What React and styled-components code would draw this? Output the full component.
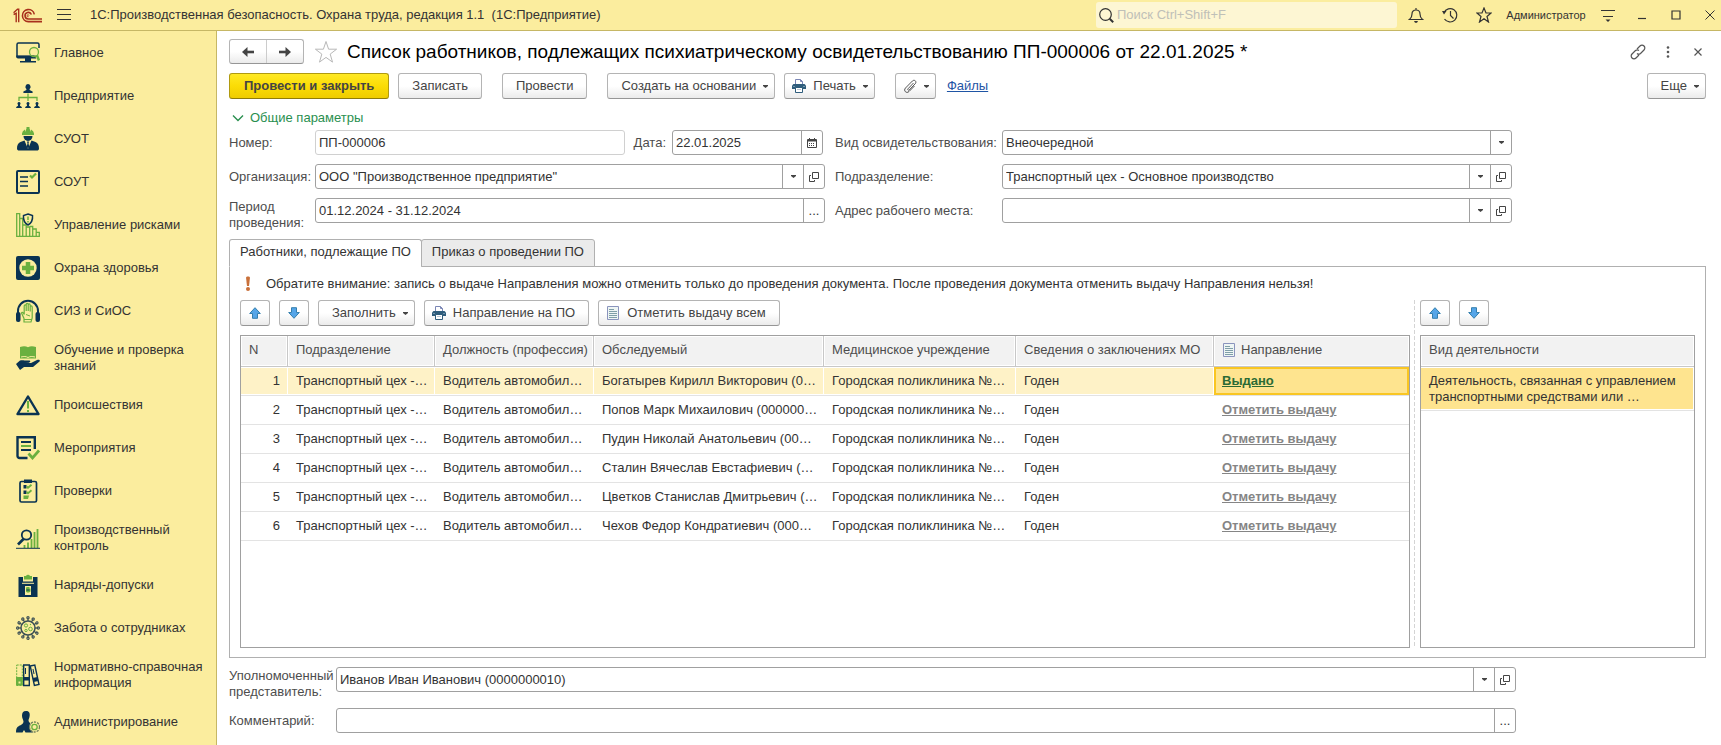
import React from 'react';
import styled, {createGlobalStyle} from 'styled-components';

const NAVY = '#0a3352';
const GREEN = '#6ab03f';

const GlobalStyle = createGlobalStyle`
  * {
    box-sizing: border-box;
  }

  body {
    margin: 0;
    background: #ffffff;
    color: #333333;
    font: 13px/16px "Liberation Sans", Arial, sans-serif;
  }

  button,
  input,
  select {
    margin: 0;
    font: inherit;
    color: inherit;
  }
`;

const Page = styled.div`
  display: flex;
  flex-direction: column;
  min-height: 100vh;
`;

const TopBar = styled.header`
  display: flex;
  align-items: center;
  height: 31px;
  padding-left: 13px;
  background: #fbed9e;
  border-bottom: 1px solid #c6b765;
`;

const AppTitle = styled.div`
  flex: 1;
  margin-left: 18px;
  white-space: pre;
`;

const MenuButton = styled.button`
  display: flex;
  align-items: center;
  justify-content: center;
  width: 16px;
  height: 20px;
  margin-left: 14px;
  padding: 0;
  border: 0;
  background: none;
`;

const Search = styled.label`
  display: flex;
  align-items: center;
  width: 301px;
  height: 26px;
  margin-right: 2px;
  padding: 0 3px;
  border-radius: 3px;
  background: #fdf6d3;
`;

const SearchInput = styled.input`
  flex: 1;
  min-width: 0;
  padding: 0 3px;
  border: 0;
  outline: 0;
  background: none;

  &::placeholder {
    color: #bfc0b8;
    opacity: 1;
  }
`;

const BarButton = styled.button`
  display: flex;
  align-items: center;
  justify-content: ${props => (props.$end ? 'flex-end' : 'center')};
  width: ${props => props.$width || 34}px;
  height: 26px;
  padding: 0 ${props => (props.$end ? 6 : 0)}px 0 0;
  border: 0;
  background: none;
  font-size: 11px;
  color: #333333;
`;

const Body = styled.div`
  display: flex;
  flex: 1;
`;

const Sidebar = styled.nav`
  flex: none;
  width: 217px;
  background: #fbed9e;
  border-right: 1px solid #c6b765;
`;

const SidebarLink = styled.a`
  display: flex;
  align-items: center;
  gap: 14px;
  padding: 10px 8px 9px 16px;
  color: #333333;
  text-decoration: none;

  svg {
    flex: none;
  }
`;

const Main = styled.main`
  display: flex;
  flex: 1;
  flex-direction: column;
  min-width: 0;
  padding: 8px 15px 12px 12px;
`;

const TitleRow = styled.div`
  display: flex;
  align-items: center;
  height: 25px;
`;

const NavGroup = styled.div`
  display: flex;
  height: 25px;
  border: 1px solid #b4b4b4;
  border-bottom-color: #969696;
  border-radius: 3px;
  background: linear-gradient(#ffffff 50%, #ebebeb);
`;

const NavButton = styled.button`
  display: flex;
  align-items: center;
  justify-content: center;
  width: 36px;
  padding: 0;
  border: 0;
  background: none;

  & + & {
    width: 37px;
    border-left: 1px solid #cccccc;
  }
`;

const Title = styled.h1`
  flex: 1;
  margin: 0;
  font-size: 19px;
  line-height: 24px;
  font-weight: 400;
  color: #000000;
  white-space: nowrap;
`;

const PlainButton = styled.button`
  display: flex;
  align-items: center;
  justify-content: ${props => (props.$end ? 'flex-end' : 'center')};
  width: ${props => props.$width || 30}px;
  height: 25px;
  padding: 0 ${props => (props.$end ? 4 : 0)}px 0 0;
  border: 0;
  background: none;
`;

const CommandBar = styled.div`
  display: flex;
  align-items: center;
  gap: 20px;
  margin-top: 9px;
`;

const ButtonGroup = styled.div`
  display: flex;
  align-items: center;
  gap: 9px;
  margin-left: ${props => (props.$end ? 'auto' : 0)};
`;

const Button = styled.button`
  display: flex;
  align-items: center;
  justify-content: center;
  gap: 7px;
  height: 26px;
  padding: 0 ${props => (props.$menu ? 6 : 13)}px 0
    ${props => (props.$icon ? 7 : 13)}px;
  border: 1px solid #b4b4b4;
  border-bottom-color: #969696;
  border-radius: 3px;
  background: linear-gradient(#ffffff 50%, #ebebeb);
  color: #444444;
  white-space: nowrap;
`;

const PrimaryButton = styled(Button)`
  padding: 0 14px;
  border-color: #b09a10;
  border-bottom-color: #8f7c08;
  background: linear-gradient(#ffe924, #fbdc06 50%, #efcc00);
  font-weight: 700;
`;

const ArrowButton = styled(Button)`
  width: 30px;
  padding: 0;
`;

const FilesLink = styled.a`
  margin-left: 2px;
  color: #1f55a5;
`;

const GroupTitle = styled.button`
  display: flex;
  align-items: center;
  align-self: flex-start;
  gap: 6px;
  margin-top: 11px;
  padding: 0 0 0 3px;
  border: 0;
  background: none;
  color: #2a8f4f;
`;

const FormGrid = styled.div`
  display: grid;
  grid-template-columns: 86px minmax(0, 1fr) 177px minmax(0, 1fr);
  align-items: start;
  row-gap: 9px;
  max-width: 1283px;
  margin-top: 4px;
`;

const BottomGrid = styled(FormGrid)`
  grid-template-columns: 107px minmax(0, 1fr);
  row-gap: 8px;
  max-width: 1287px;
  margin-top: 9px;
`;

const Label = styled.label`
  padding-top: ${props => (props.$tall ? 1 : 5)}px;
  padding-left: ${props => (props.$inset ? 10 : 0)}px;
  color: #4d4d4d;
  white-space: nowrap;
`;

const NumberRow = styled.div`
  display: flex;
  padding-right: 2px;

  ${Label} {
    padding: 5px 6px 0 9px;
  }
`;

const Field = styled.div`
  display: flex;
  flex: ${props => (props.$width ? 'none' : 1)};
  width: ${props => (props.$width ? `${props.$width}px` : 'auto')};
  min-width: 0;
  height: 25px;
  border: 1px solid ${props => (props.$muted ? '#d0d0d0' : '#a0a0a0')};
  border-radius: 3px;
  background: #ffffff;
`;

const Input = styled.input`
  flex: 1;
  min-width: 0;
  padding: 0 3px;
  border: 0;
  outline: 0;
  background: none;
`;

const Select = styled.select`
  flex: 1;
  min-width: 0;
  padding: 0 3px;
  border: 0;
  outline: 0;
  background: none;
  appearance: none;
`;

const FieldButton = styled.button`
  display: flex;
  align-items: center;
  justify-content: center;
  width: 21px;
  padding: 0;
  border: 0;
  border-left: 1px solid #a0a0a0;
  background: none;
`;

const Tabs = styled.div`
  display: flex;
  margin-top: 8px;
`;

const Tab = styled.button`
  position: relative;
  height: 28px;
  margin-bottom: -1px;
  padding: 0 10px 2px;
  border: 1px solid #b0b0b0;
  border-bottom-color: ${props => (props.$active ? '#ffffff' : '#b0b0b0')};
  border-radius: 3px 3px 0 0;
  background: ${props => (props.$active ? '#ffffff' : '#ebebeb')};

  & + & {
    margin-left: -1px;
  }
`;

const Panel = styled.section`
  display: flex;
  flex: 1;
  flex-direction: column;
  padding: 9px 10px;
  border: 1px solid #b0b0b0;
`;

const Warning = styled.div`
  display: flex;
  align-items: center;
  gap: 14px;
  height: 16px;
  margin-bottom: 8px;
  padding-left: 4px;
`;

const Split = styled.div`
  display: flex;
  flex: 1;
`;

const Pane = styled.div`
  display: flex;
  flex: 1;
  flex-direction: column;
  gap: 9px;
  min-width: 0;
`;

const SidePane = styled(Pane)`
  flex: none;
  width: 275px;
`;

const Splitter = styled.div`
  width: 1px;
  margin: 0 5px 0 4px;
  background: repeating-linear-gradient(#d4d4d4 0 4px, transparent 4px 6px);
`;

const TableBox = styled.div`
  flex: 1;
  border: 1px solid #a0a0a0;
`;

const Table = styled.table`
  width: 100%;
  table-layout: fixed;
  border-collapse: separate;
  border-spacing: 0;
`;

const Th = styled.th`
  height: 31px;
  padding: 0 0 2px 8px;
  border-right: 1px solid #c8c8c8;
  border-bottom: 1px solid #c8c8c8;
  background: #f2f2f2;
  box-shadow: inset 0 0 0 1px #ffffff;
  color: #4d4d4d;
  font-weight: 400;
  text-align: left;
  white-space: nowrap;
  overflow: hidden;

  &:last-child {
    border-right: 0;
  }
`;

const ThContent = styled.span`
  display: flex;
  align-items: center;
  gap: 5px;
`;

const Td = styled.td`
  height: ${props => (props.$tall ? 44 : 29)}px;
  padding: 0 8px;
  border-bottom: 1px solid #e3e3e3;
  background: ${props => props.$fill || 'transparent'};
  box-shadow: ${props =>
    props.$current
      ? 'inset 0 0 0 2px #f9c623'
      : 'inset -1px 0 #ffffff, inset 0 1px #ffffff, inset 0 -1px #ffffff'};
  text-align: ${props => (props.$right ? 'right' : 'left')};
  white-space: ${props => (props.$tall ? 'normal' : 'nowrap')};
  overflow: hidden;
`;

const IssueLink = styled.a`
  color: ${props => (props.$done ? '#2b6b35' : '#858585')};
  font-weight: 700;
`;

const Icon = ({size = 24, children, ...rest}) => (
  <svg
    width={size}
    height={size}
    viewBox={`0 0 ${size} ${size}`}
    fill="none"
    aria-hidden="true"
    {...rest}
  >
    {children}
  </svg>
);

const Caret = () => (
  <svg width="5" height="3" viewBox="0 0 5 3" aria-hidden="true">
    <path d="M0 0h5v1L2.500 3 0 1z" fill="#444" />
  </svg>
);

const OpenIcon = () => (
  <Icon size={10} stroke="#444">
    <path d="M3.500.5h6v6h-6zM2 3.500H.5v6h5V8" />
  </Icon>
);

const PrintIcon = () => (
  <Icon size={14}>
    <path d="M3.500 6V.5h5l2 2V6" stroke="#7b86b5" fill="#fff" />
    <path d="M8.500.5v2h2" stroke="#7b86b5" />
    <path d="M1.500 5h11L14 6.500V10H0V6.500z" fill="#2f5d7c" />
    <path d="M1.500 7.500h1M11.500 7.500h1" stroke="#b9d2e2" />
    <path d="M3.500 8.500h7v5h-7z" fill="#fff" stroke="#2f5d7c" />
    <path d="M5 10.500h4" stroke="#b9c6d2" />
  </Icon>
);

const SheetIcon = () => (
  <Icon size={14}>
    <path d="M1.500.5h11v13h-11z" fill="#eef5f4" stroke="#8a94bd" />
    <path d="M3 3.500h5M3 5.500h8M3 7.500h8M3 9.500h8M3 11.500h8" stroke="#7f9fa8" />
  </Icon>
);

const UpIcon = () => (
  <Icon size={12}>
    <path d="M6 .7l5.300 5.800H8.500v4.800h-5V6.500H.7z" fill="#55a5e8" stroke="#347fae" />
  </Icon>
);

const DownIcon = () => (
  <Icon size={12}>
    <path d="M6 11.300l5.300-5.800H8.500V.7h-5v4.800H.7z" fill="#55a5e8" stroke="#347fae" />
  </Icon>
);

const Logo = () => (
  <svg width="29" height="15" viewBox="0 0 29 15" fill="none" aria-label="1С" stroke="#a8301c">
    <path d="M.6 4.700L4.500 1.300h1.200v12.900M3.200 14.200V5.300L.6 6.500" strokeWidth="1.400" />
    <path d="M21.300 6.300a6 6 0 1 0-6 7.300H29" strokeWidth="1.600" />
    <path d="M18.400 6.500a3.300 3.300 0 1 0-3 4.500H29" strokeWidth="1.600" />
    <path d="M16 7.500a1 1 0 1 0-.5 1.200" strokeWidth="1" />
  </svg>
);

const Worker = ({x}) => (
  <path
    d="M0 0a1.500 1.600 0 0 1 1 2.800v1L2.800 5v1h-5.600V5L-1 3.800v-1A1.500 1.600 0 0 1 0 0z"
    transform={`translate(${x} 18)`}
    fill={NAVY}
  />
);

const HomeIcon = () => (
  <Icon>
    <path d="M20 15.500H1V3.500c0-1 .5-1.500 1.500-1.500h19c1 0 1.500.5 1.500 1.500V7" stroke={NAVY} strokeWidth="1.500" />
    <path d="M.3 14.500h18l2 3H2c-1 0-1.700-.7-1.700-1.700zM9 17h6v3H9zM4 20h16v1.500H4z" fill={NAVY} />
    <circle cx="18" cy="11" r="4.500" stroke={GREEN} strokeWidth="1.300" />
    <path d="M21 14.500l2 5" stroke={GREEN} strokeWidth="2.500" />
  </Icon>
);

const CompanyIcon = () => (
  <Icon>
    <path d="M12 0a2.600 2.800 0 0 1 1.600 5v1l3 1.500V9H7.400V7.500l3-1.500V5A2.600 2.800 0 0 1 12 0z" fill={NAVY} />
    <path d="M12 9.500v7.500M3 17v-3.500h18V17" stroke={GREEN} strokeWidth="1.300" />
    <Worker x={3} />
    <Worker x={12} />
    <Worker x={21} />
  </Icon>
);

const SafetyIcon = () => (
  <Icon>
    <path d="M6 8V6.500a6 5 0 0 1 3-4v2.500l1.500-3.500V0h3v1.500L15 5V2.500a6 5 0 0 1 3 4V8z" fill={GREEN} />
    <path d="M7.500 9h9a4.500 5 0 0 1-9 0z" fill={NAVY} />
    <path d="M8.500 13.500L12 22l3.500-8.500 4 1.500c2.500 1 3.500 3.500 3.500 6.500 0 1.500-1 2-2 2H3c-1 0-2-.5-2-2C1 18.500 2 16 4.500 15z" fill={NAVY} />
    <path d="M11 14.500h2l-.5 2 .8 3L12 22l-1.300-2.500.8-3z" fill={NAVY} />
  </Icon>
);

const ChecklistIcon = () => (
  <Icon>
    <rect x="1" y="1" width="22" height="22" rx="1" stroke={NAVY} strokeWidth="2" />
    <path d="M4 7h8M4 11.500h8M4 16h8" stroke={NAVY} strokeWidth="1.700" />
    <path d="M14 5.500l2 2L20 3.500" stroke={GREEN} strokeWidth="2.200" />
  </Icon>
);

const RiskIcon = () => (
  <Icon>
    <path d="M.7.7h3v22.600h-3zM3.700 5.500h3v17.800M3.700 23.300h19.600v-4h-3M6.700 12h3.500v11M10.200 14h3.500v9M13.700 13.500h3v10M16.700 16h3.500v7" stroke={GREEN} strokeWidth="1.300" />
    <path d="M12 1l4.500 1.500c.5 5-1 7.500-4.500 9.500-3.500-2-5-4.500-4.500-9.500z" fill="#fbed9e" stroke={NAVY} strokeWidth="1.500" />
    <path d="M12 3.500V7M12 8v1.500" stroke={GREEN} strokeWidth="1.500" />
  </Icon>
);

const HealthIcon = () => (
  <Icon>
    <rect width="24" height="24" rx="2" fill={NAVY} />
    <circle cx="12" cy="12" r="8.700" fill="#fbed9e" />
    <path d="M12 6v12M6 12h12" stroke={GREEN} strokeWidth="4.500" />
  </Icon>
);

const ProtectionIcon = () => (
  <Icon>
    <path d="M2 14v-2a10 10.300 0 0 1 20 0v2" stroke={NAVY} strokeWidth="2" />
    <rect y="13" width="4.500" height="10" rx="2" fill={NAVY} />
    <rect x="19.500" y="13" width="4.500" height="10" rx="2" fill={NAVY} />
    <path d="M8 23v-3.500L5.500 14c.5-1.500 2-.5 2.700 1.500V7c0-1.500 2-1.500 2 0v5V5.500c0-1.500 2-1.500 2 0V12 6c0-1.500 2-1.500 2 0v6.500V8c0-1.500 2-1.500 2 0v11L15 23z" stroke={GREEN} strokeWidth="1.200" />
    <path d="M10 15.500l4 1.500M8 20.500h8" stroke={GREEN} />
  </Icon>
);

const TrainingIcon = () => (
  <Icon>
    <path d="M4 1c3-1 6-1 8 .3 2-1.300 5-1.300 8-.3v11.500H4z" fill={GREEN} />
    <path d="M5 11c3-.7 5-.7 7 .5 2-1.200 4-1.200 7-.5" stroke="#fbed9e" />
    <path d="M0 18l4-3.500c3-1 5 .5 9 0 2 0 1.500 2-.5 2.200H9l6 .3 6-3c2-.7 3.500 0 2.500 1.500L17 21H8l-4 3z" fill={NAVY} />
  </Icon>
);

const AccidentIcon = () => (
  <Icon>
    <path d="M12 3.500L22.500 21h-21z" stroke={NAVY} strokeWidth="2.400" strokeLinejoin="round" />
    <path d="M12 8v7.500M12 17v2" stroke={GREEN} strokeWidth="2" />
  </Icon>
);

const EventsIcon = () => (
  <Icon>
    <path d="M11.500 22H3.500a2 2 0 0 1-2-2V1.200h17.300V13" stroke={NAVY} strokeWidth="2.400" />
    <path d="M5 6h10M5 14h10" stroke={NAVY} strokeWidth="2" />
    <path d="M5 10h10" stroke={GREEN} strokeWidth="2" />
    <path d="M12.500 17.500l4 4.500L23 14.500" stroke={GREEN} strokeWidth="2.700" />
  </Icon>
);

const AuditIcon = () => (
  <Icon>
    <rect x="4" y="2.500" width="16.500" height="20.500" rx="1.500" stroke={NAVY} strokeWidth="1.700" />
    <path d="M8 .5h8v3.500H8zM7.500 6h3v3.500h-3zM7.500 11.500h3V15h-3z" fill={NAVY} />
    <path d="M10.500 7.500l1.500 1.300 3.500-3M10.500 13l1.500 1.300 3.500-3" stroke={GREEN} strokeWidth="1.800" />
    <path d="M7.500 16.500H13l-1 3.500H7.500z" fill={GREEN} />
  </Icon>
);

const ControlIcon = () => (
  <Icon>
    <path d="M8.500 22v-3M12 22v-5.500M15.500 22V13M18.500 22V6M21.500 22V3" stroke={GREEN} strokeWidth="1.800" />
    <circle cx="10.500" cy="9" r="4.700" stroke={NAVY} strokeWidth="1.800" />
    <path d="M7.500 13L2 18.500" stroke={NAVY} strokeWidth="2.700" />
    <path d="M0 22.300h24" stroke={NAVY} />
  </Icon>
);

const PermitIcon = () => (
  <Icon>
    <path d="M2.500 4H7v4.500h10V4h4.500v20h-19z" fill={NAVY} />
    <path d="M8 6.500V3h2a2.200 2.200 0 0 1 4 0h2v3.500z" fill={GREEN} />
    <path d="M6 10.300h12" stroke="#fbed9e" />
    <path d="M9 13h6v9H9z" fill="#fbed9e" />
    <path d="M10.500 14h3v1.500h1v3l-1.500 1h-2l-1-1v-3z" fill={GREEN} />
    <path d="M10.500 17h3" stroke={NAVY} />
  </Icon>
);

const spikes = [0, 30, 60, 90, 120, 150, 180, 210, 240, 270, 300, 330];

const CareIcon = () => (
  <Icon>
    <circle cx="12" cy="12" r="7" stroke="#3b4f54" strokeWidth="1.500" />
    {spikes.map(angle => (
      <g key={angle} transform={`rotate(${angle} 12 12)`}>
        <path d="M12 2.500v2.500" stroke="#3b4f54" strokeWidth="1.200" />
        <circle cx="12" cy="1.700" r="1.100" stroke="#3b4f54" strokeWidth="1.200" />
      </g>
    ))}
    <circle cx="10" cy="9.500" r="1.600" stroke={GREEN} />
    <circle cx="14.500" cy="13" r="1.800" stroke={GREEN} />
    <circle cx="10" cy="14.500" r="1.200" stroke={GREEN} />
    <circle cx="14.500" cy="8.500" r=".7" fill={GREEN} />
  </Icon>
);

const ReferenceIcon = () => (
  <Icon>
    <path d="M.7 2h5.600v20.500H.7z" stroke={GREEN} strokeDasharray="2 1" />
    <path d="M0 14h6.800v8.500H0z" fill={GREEN} />
    <path d="M7.700 2h5.600v20.500H7.700zM14.200 3l4.600-1 4.200 19.500-4.600 1z" stroke={NAVY} strokeWidth="1.400" />
    <path d="M7.500 14h6v3.500h-6zM16.500 15l5-1 1 4-5 1z" fill={NAVY} />
    <path d="M9.500 5v6M17 6l1 5" stroke={NAVY} />
    <path d="M2.500 18.500h2v2h-2z" fill="#fbed9e" />
  </Icon>
);

const AdminIcon = () => (
  <Icon>
    <path d="M10 1c3 0 4 2 3.700 4.500C13.500 8 12.500 9 12.500 10.500c0 2 2.500 2.500 2.500 5 0 3 .5 5 2 7H9.500L8 20l-1.500 2.500H0c0-3 .5-5.500 3-6.500 2-1 4.500-2 4.500-4.500C7 9 6 8 6 5.500 6 3 7 1 10 1z" fill={NAVY} />
    <circle cx="18.500" cy="17" r="5" fill="#fbed9e" stroke="#71805a" strokeWidth="1.300" strokeDasharray="2.200 1" />
    <circle cx="18.500" cy="17" r="2.700" stroke={GREEN} strokeWidth="1.300" />
  </Icon>
);

const sections = [
  ['Главное', HomeIcon],
  ['Предприятие', CompanyIcon],
  ['СУОТ', SafetyIcon],
  ['СОУТ', ChecklistIcon],
  ['Управление рисками', RiskIcon],
  ['Охрана здоровья', HealthIcon],
  ['СИЗ и СиОС', ProtectionIcon],
  ['Обучение и проверка знаний', TrainingIcon],
  ['Происшествия', AccidentIcon],
  ['Мероприятия', EventsIcon],
  ['Проверки', AuditIcon],
  ['Производственный контроль', ControlIcon],
  ['Наряды-допуски', PermitIcon],
  ['Забота о сотрудниках', CareIcon],
  ['Нормативно-справочная информация', ReferenceIcon],
  ['Администрирование', AdminIcon]
];

const people = [
  'Богатырев Кирилл Викторович (0…',
  'Попов Марк Михаилович (000000…',
  'Пудин Николай Анатольевич (00…',
  'Сталин Вячеслав Евстафиевич (…',
  'Цветков Станислав Дмитрьевич (…',
  'Чехов Федор Кондратиевич (000…'
];

const Header = () => (
  <TopBar>
    <Logo />
    <MenuButton aria-label="Меню">
      <Icon size={16} stroke="#333">
        <path d="M1 2.500h14M1 7.500h14M1 12.500h14" />
      </Icon>
    </MenuButton>
    <AppTitle>
      1С:Производственная безопасность. Охрана труда, редакция 1.1{'  '}(1С:Предприятие)
    </AppTitle>
    <Search>
      <Icon size={15} stroke="#333">
        <circle cx="6.500" cy="6.500" r="5.800" strokeWidth="1.200" />
        <path d="M10.700 10.700l3.500 3.500" strokeWidth="2" />
      </Icon>
      <SearchInput type="search" placeholder="Поиск Ctrl+Shift+F" aria-label="Поиск" />
    </Search>
    <BarButton aria-label="Уведомления">
      <Icon size={16} stroke="#333">
        <path d="M1.500 12.500c2-1.500 2.500-3 2.500-5.500 0-2.500 1.500-4 4-4s4 1.500 4 4c0 2.500.5 4 2.500 5.500zM8 1v2" strokeWidth="1.200" />
        <path d="M6 14h4l-1 1.700H7z" fill="#333" stroke="none" />
      </Icon>
    </BarButton>
    <BarButton aria-label="История">
      <Icon size={16} stroke="#333">
        <path d="M2 5.500A6.700 6.700 0 1 1 2.500 12M8.500 4v4.500l3 3" strokeWidth="1.200" />
        <path d="M0 4h4.500L2 7.500z" fill="#333" stroke="none" />
      </Icon>
    </BarButton>
    <BarButton aria-label="Избранное">
      <Icon size={16} stroke="#333">
        <path d="M8 1l2 5h5l-4 3.500 1.500 5.500L8 11.800 3.500 15 5 9.500 1 6h5z" strokeWidth="1.200" />
      </Icon>
    </BarButton>
    <BarButton $width={90}>Администратор</BarButton>
    <BarButton aria-label="Сервис">
      <Icon size={16} stroke="#333">
        <path d="M1 3.500h14M3 9.500h10" strokeWidth="1.200" />
        <path d="M5.500 12.500h5L8 15z" fill="#333" stroke="none" />
      </Icon>
    </BarButton>
    <BarButton aria-label="Свернуть">
      <Icon size={10} stroke="#333">
        <path d="M1 8.500h8" strokeWidth="1.200" />
      </Icon>
    </BarButton>
    <BarButton aria-label="Развернуть">
      <Icon size={10} stroke="#333">
        <path d="M1 1h8v8H1z" strokeWidth="1.200" />
      </Icon>
    </BarButton>
    <BarButton $width={28} $end aria-label="Закрыть">
      <Icon size={10} stroke="#333">
        <path d="M.5.5l9 9M9.500.5l-9 9" />
      </Icon>
    </BarButton>
  </TopBar>
);

const MoveButtons = () => (
  <>
    <ArrowButton aria-label="Переместить вверх">
      <UpIcon />
    </ArrowButton>
    <ArrowButton aria-label="Переместить вниз">
      <DownIcon />
    </ArrowButton>
  </>
);

const SelectField = ({id, value, open}) => (
  <Field>
    <Select id={id} defaultValue={value}>
      <option>{value}</option>
    </Select>
    <FieldButton as="span" aria-hidden="true">
      <Caret />
    </FieldButton>
    {open && (
      <FieldButton aria-label="Открыть">
        <OpenIcon />
      </FieldButton>
    )}
  </Field>
);

const Params = () => (
  <FormGrid>
    <Label htmlFor="number">Номер:</Label>
    <NumberRow>
      <Field $muted>
        <Input id="number" defaultValue="ПП-000006" readOnly />
      </Field>
      <Label htmlFor="date">Дата:</Label>
      <Field $width={151}>
        <Input id="date" defaultValue="22.01.2025" />
        <FieldButton aria-label="Календарь">
          <Icon size={10} stroke="#444">
            <path d="M.5 1.500h9v8h-9zM2.500 0v2M7.500 0v2" />
            <path d="M1 2.500h8" strokeWidth="2" />
            <path d="M2 5.500h6M2 7.500h6" strokeDasharray="1 1" />
          </Icon>
        </FieldButton>
      </Field>
    </NumberRow>
    <Label htmlFor="kind" $inset>
      Вид освидетельствования:
    </Label>
    <SelectField id="kind" value="Внеочередной" />

    <Label htmlFor="org">Организация:</Label>
    <SelectField id="org" value={'ООО "Производственное предприятие"'} open />
    <Label htmlFor="unit" $inset>
      Подразделение:
    </Label>
    <SelectField id="unit" value="Транспортный цех - Основное производство" open />

    <Label htmlFor="period" $tall>
      Период
      <br />
      проведения:
    </Label>
    <Field>
      <Input id="period" defaultValue="01.12.2024 - 31.12.2024" />
      <FieldButton aria-label="Выбрать период">...</FieldButton>
    </Field>
    <Label htmlFor="address" $inset>
      Адрес рабочего места:
    </Label>
    <SelectField id="address" value="" open />
  </FormGrid>
);

const WorkersTable = () => (
  <TableBox>
    <Table>
      <colgroup>
        <col width="47" />
        <col width="147" />
        <col width="159" />
        <col width="230" />
        <col width="192" />
        <col width="198" />
        <col />
      </colgroup>
      <thead>
        <tr>
          <Th>N</Th>
          <Th>Подразделение</Th>
          <Th>Должность (профессия)</Th>
          <Th>Обследуемый</Th>
          <Th>Медицинское учреждение</Th>
          <Th>Сведения о заключениях МО</Th>
          <Th>
            <ThContent>
              <SheetIcon />
              Направление
            </ThContent>
          </Th>
        </tr>
      </thead>
      <tbody>
        {people.map((name, index) => {
          const selected = index === 0;
          const fill = selected ? '#fef2c7' : undefined;
          return (
            <tr key={name}>
              <Td $fill={fill} $right>
                {index + 1}
              </Td>
              <Td $fill={fill}>Транспортный цех -…</Td>
              <Td $fill={fill}>Водитель автомобил…</Td>
              <Td $fill={fill}>{name}</Td>
              <Td $fill={fill}>Городская поликлиника №…</Td>
              <Td $fill={fill}>Годен</Td>
              <Td $fill={selected ? '#fee48f' : undefined} $current={selected}>
                <IssueLink href="#issue" $done={selected}>
                  {selected ? 'Выдано' : 'Отметить выдачу'}
                </IssueLink>
              </Td>
            </tr>
          );
        })}
      </tbody>
    </Table>
  </TableBox>
);

const App = () => (
  <Page>
    <GlobalStyle />
    <Header />
    <Body>
      <Sidebar>
        {sections.map(([title, SectionIcon]) => (
          <SidebarLink key={title} href="#section">
            <SectionIcon />
            <span>{title}</span>
          </SidebarLink>
        ))}
      </Sidebar>
      <Main>
        <TitleRow>
          <NavGroup>
            <NavButton aria-label="Назад">
              <Icon size={14}>
                <path d="M13 7H3" stroke="#444" strokeWidth="2.600" />
                <path d="M1 7l5.500-5v10z" fill="#444" />
              </Icon>
            </NavButton>
            <NavButton aria-label="Вперед">
              <Icon size={14}>
                <path d="M1 7h10" stroke="#444" strokeWidth="2.600" />
                <path d="M13 7L7.500 2v10z" fill="#444" />
              </Icon>
            </NavButton>
          </NavGroup>
          <PlainButton $width={43} aria-label="В избранное">
            <Icon size={24} stroke="#b8b8b8">
              <path d="M12 1.500l2.600 7.700h8l-6.400 4.900 2.300 8-6.500-4.700-6.500 4.700 2.300-8-6.400-4.900h8z" />
            </Icon>
          </PlainButton>
          <Title>
            Список работников, подлежащих психиатрическому освидетельствованию ПП-000006 от
            22.01.2025 *
          </Title>
          <PlainButton aria-label="Ссылка">
            <Icon size={16} stroke="#555">
              <path d="M7 5l3-3a2.700 2.700 0 0 1 4 4l-3.500 3.500a2.700 2.700 0 0 1-3.500 0M9 11l-3 3a2.700 2.700 0 0 1-4-4l3.500-3.500a2.700 2.700 0 0 1 3.500 0" strokeWidth="1.200" />
            </Icon>
          </PlainButton>
          <PlainButton aria-label="Еще действия">
            <Icon size={12} fill="#555">
              <circle cx="6" cy="1.500" r="1.300" />
              <circle cx="6" cy="6" r="1.300" />
              <circle cx="6" cy="10.500" r="1.300" />
            </Icon>
          </PlainButton>
          <PlainButton $width={23} $end aria-label="Закрыть форму">
            <Icon size={8} stroke="#555">
              <path d="M.5.5l7 7M7.500.5l-7 7" strokeWidth="1.200" />
            </Icon>
          </PlainButton>
        </TitleRow>

        <CommandBar>
          <ButtonGroup>
            <PrimaryButton>Провести и закрыть</PrimaryButton>
            <Button>Записать</Button>
          </ButtonGroup>
          <Button>Провести</Button>
          <ButtonGroup>
            <Button $menu>
              Создать на основании
              <Caret />
            </Button>
            <Button $icon $menu>
              <PrintIcon />
              Печать
              <Caret />
            </Button>
          </ButtonGroup>
          <ButtonGroup>
            <Button $icon $menu aria-label="Присоединенные файлы">
              <Icon size={14} stroke="#555">
                <path d="M10.500 4L5 9.800c-.8.800.3 2 1.200 1.200l6-6.200c2-2.200-.8-4.800-2.800-2.800L2.500 9c-2.500 2.700 1 6 3.500 3.500L11.500 7" />
              </Icon>
              <Caret />
            </Button>
            <FilesLink href="#files">Файлы</FilesLink>
          </ButtonGroup>
          <ButtonGroup $end>
            <Button $menu>
              Еще
              <Caret />
            </Button>
          </ButtonGroup>
        </CommandBar>

        <GroupTitle>
          <Icon size={12} stroke="#2a8f4f">
            <path d="M1 3.500l5 5 5-5" strokeWidth="1.400" />
          </Icon>
          Общие параметры
        </GroupTitle>
        <Params />

        <Tabs role="tablist">
          <Tab role="tab" aria-selected="true" $active>
            Работники, подлежащие ПО
          </Tab>
          <Tab role="tab" aria-selected="false">
            Приказ о проведении ПО
          </Tab>
        </Tabs>
        <Panel>
          <Warning>
            <svg width="8" height="16" viewBox="0 0 8 16" aria-hidden="true">
              <path d="M2 1.500c0-1.500 4-1.500 4 0L5 10H3z" fill="#c9703a" />
              <circle cx="4" cy="13" r="2" fill="#c9703a" />
            </svg>
            Обратите внимание: запись о выдаче Направления можно отменить только до проведения
            документа. После проведения документа отменить выдачу Направления нельзя!
          </Warning>
          <Split>
            <Pane>
              <ButtonGroup>
                <MoveButtons />
                <Button $menu>
                  Заполнить
                  <Caret />
                </Button>
                <Button $icon>
                  <PrintIcon />
                  Направление на ПО
                </Button>
                <Button $icon>
                  <SheetIcon />
                  Отметить выдачу всем
                </Button>
              </ButtonGroup>
              <WorkersTable />
            </Pane>
            <Splitter />
            <SidePane>
              <ButtonGroup>
                <MoveButtons />
              </ButtonGroup>
              <TableBox>
                <Table>
                  <thead>
                    <tr>
                      <Th>Вид деятельности</Th>
                    </tr>
                  </thead>
                  <tbody>
                    <tr>
                      <Td $tall $fill="#fee48f">
                        Деятельность, связанная с управлением транспортными средствами или …
                      </Td>
                    </tr>
                  </tbody>
                </Table>
              </TableBox>
            </SidePane>
          </Split>
        </Panel>

        <BottomGrid>
          <Label htmlFor="agent" $tall>
            Уполномоченный
            <br />
            представитель:
          </Label>
          <SelectField id="agent" value="Иванов Иван Иванович (0000000010)" open />
          <Label htmlFor="comment">Комментарий:</Label>
          <Field>
            <Input id="comment" />
            <FieldButton aria-label="Редактировать комментарий">...</FieldButton>
          </Field>
        </BottomGrid>
      </Main>
    </Body>
  </Page>
);

export default App;
